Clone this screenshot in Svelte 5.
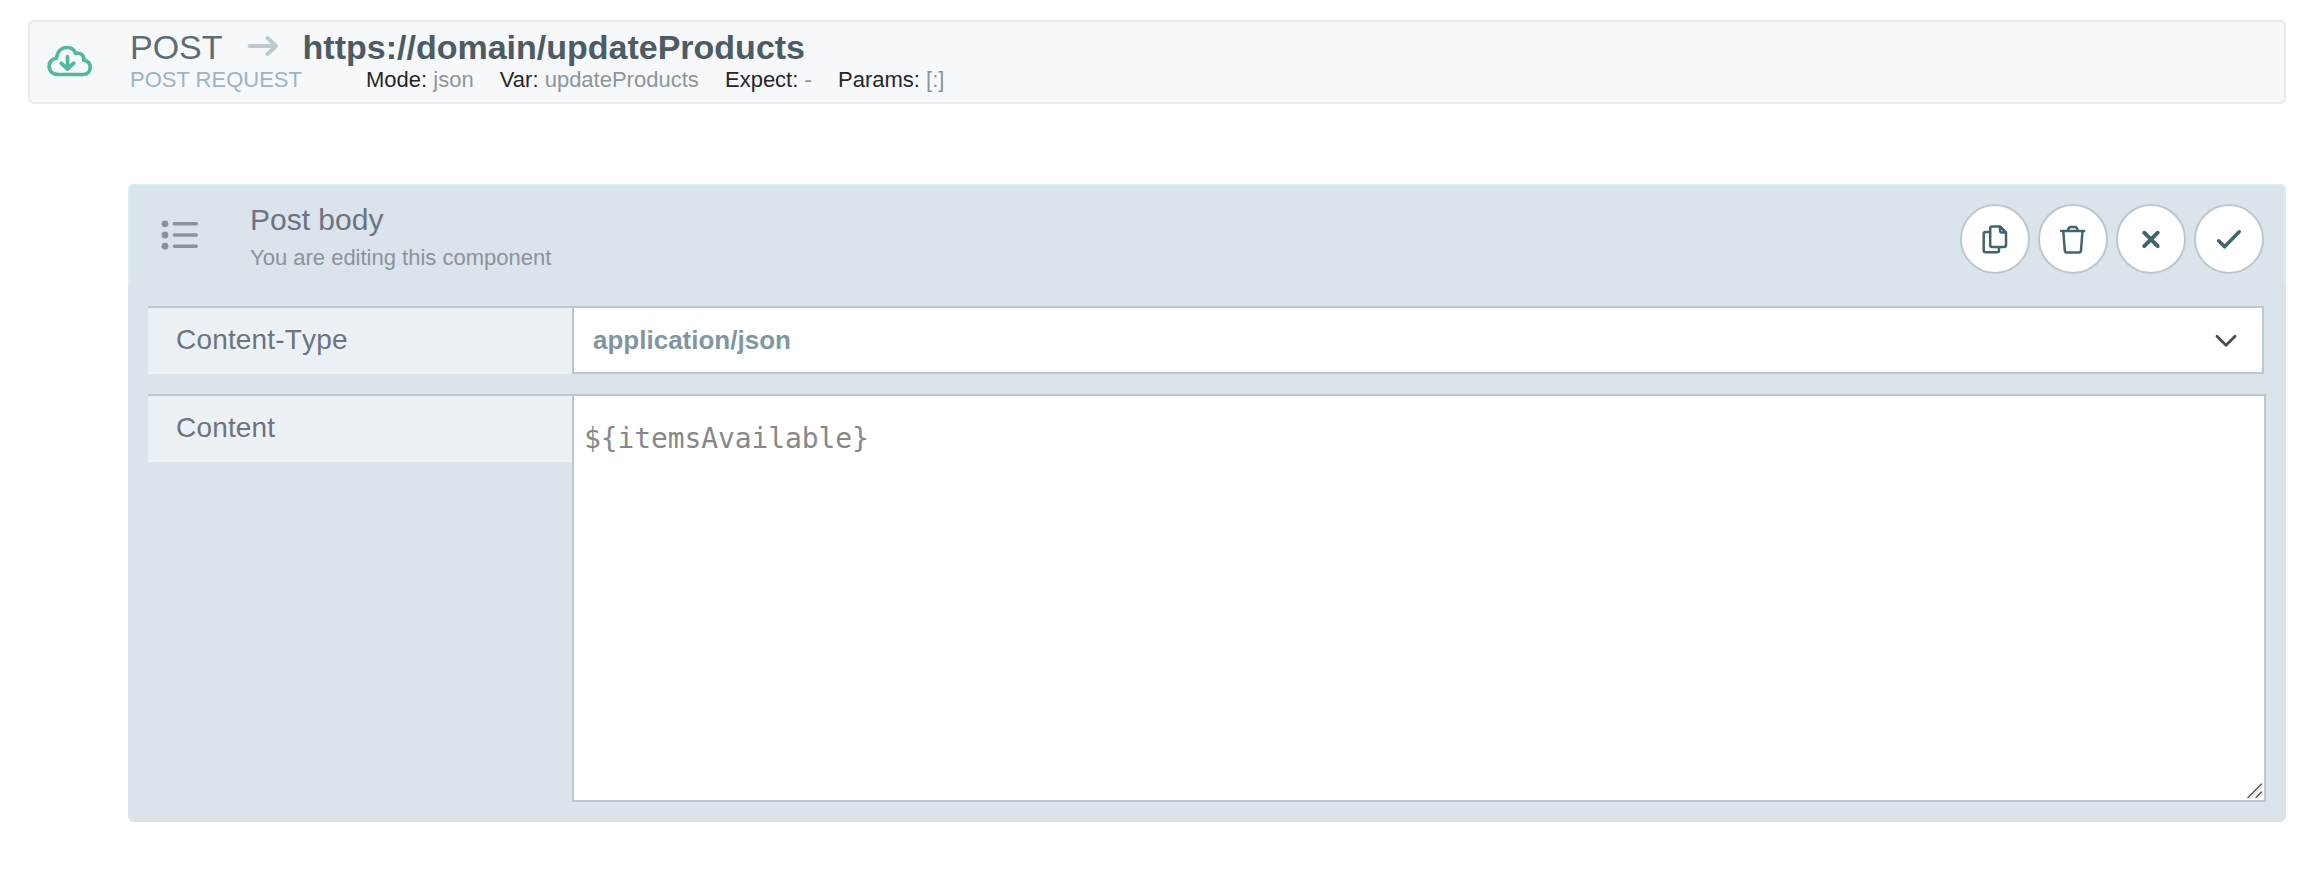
<script>
  const details = [
    { label: 'Mode', value: 'json' },
    { label: 'Var', value: 'updateProducts' },
    { label: 'Expect', value: '-' },
    { label: 'Params', value: '[:]' }
  ];
  let content = $state('${itemsAvailable}');
</script>

<main>
  <section class="request">
    <svg class="cloud" width="46" height="34" viewBox="0 0 46 34">
      <path d="M9.500 13.200C10.500 6 15 2.500 20 2.500c4.500 0 7.300 2.300 8.800 6C34 7.300 37.200 10.500 36.800 15.300C41 16 43.200 18.600 43.200 22.200C43.200 26.600 40.200 29.500 36 29.500H11.500C6 29.500 2.200 26.200 2.200 21.300C2.200 16.800 5 14 9.500 13.200Z" />
      <path d="M20.500 11.500v12.500M14.200 18.200l6.300 6 6.300-6" />
    </svg>
    <div class="summary">
      <div class="title">
        <span>POST</span>
        <svg width="32" height="22" viewBox="0 0 32 22"><path d="M2.500 11H29M20.500 3l8.500 8-8.500 8" /></svg>
        <strong>https://domain/updateProducts</strong>
      </div>
      <div class="meta">
        <span class="kind">POST REQUEST</span>
        {#each details as item}
          <span class="detail"><b>{item.label}:</b> {item.value}</span>
        {/each}
      </div>
    </div>
  </section>

  <section class="editor">
    <header>
      <svg class="list" width="38" height="32" viewBox="0 0 38 32">
        <g><circle cx="4" cy="4.800" r="3.400" /><circle cx="4" cy="16" r="3.400" /><circle cx="4" cy="27.200" r="3.400" /></g>
        <path d="M13.400 4.800h21.800M13.400 16h21.800M13.400 27.200h21.800" />
      </svg>
      <div class="heading">
        <h2>Post body</h2>
        <p>You are editing this component</p>
      </div>
      <div class="actions">
        <button aria-label="Copy">
          <svg viewBox="0 0 70 70"><path d="M32 22.500h8L46 28.500V41q0 2-2 2H32.200q-2 0-2-2V24.500q0-2 1.800-2ZM40 22.500v4q0 2 2 2H46M30 28h-4.500q-1.800 0-1.800 2v16.500q0 1.800 1.800 1.800h11.500q2 0 2-1.800v-3.500" /></svg>
        </button>
        <button aria-label="Delete">
          <svg viewBox="0 0 70 70"><path d="M23.200 27h23M25.300 27l1.500 19.600q.2 1.800 1.800 1.800h12.600q1.600 0 1.800-1.800l1.500-19.600M29.800 27q.6-4 3-4h4q2.400 0 3 4" /></svg>
        </button>
        <button aria-label="Close">
          <svg viewBox="0 0 70 70"><path class="cross" d="M28.200 28.700l13.500 13.500M41.700 28.700l-13.500 13.500" /></svg>
        </button>
        <button aria-label="Save">
          <svg viewBox="0 0 70 70"><path class="check" d="M24.600 36.800l6 6L45.200 27.800" /></svg>
        </button>
      </div>
    </header>

    <div class="fields">
      <div class="row">
        <div class="label">Content-Type</div>
        <div class="select">
          <strong>application/json</strong>
          <svg width="24" height="16" viewBox="0 0 24 16"><path d="M3 4.200l9 9 9-9" /></svg>
        </div>
      </div>
      <div class="row">
        <div class="label">Content</div>
        <div class="area">
          <textarea aria-label="Content" spellcheck="false" bind:value={content}></textarea>
          <svg class="grip" width="16" height="16" viewBox="0 0 16 16">
            <path class="halo" d="M3 15.500L16 2.500M11 15.500L16 10.500" /><path d="M1 14.500L14.500 1M9 14.500L14.500 9" />
          </svg>
        </div>
      </div>
    </div>
  </section>
</main>

<style>
  :global(body) { background: #fff; }
  main {
    box-sizing: border-box;
    padding: 20px 30px 50px 28px;
    font-family: "Liberation Sans", Arial, sans-serif;
  }
  svg { display: block; fill: none; stroke-linecap: round; stroke-linejoin: round; }
  h2, p { margin: 0; font-weight: 400; }

  .request {
    box-sizing: border-box;
    height: 84px;
    display: flex;
    align-items: flex-start;
    background: #f6f8fa;
    border: 2px solid #e8eaf0;
    border-radius: 6px;
  }
  .cloud { margin: 22.600px 0 0 17px; stroke: #4fb99f; stroke-width: 3.700; }
  .summary { margin: 7px 0 0 37px; }
  .title { display: flex; height: 36px; line-height: 36px; font-size: 34px; color: #5e6d72; }
  .title svg { margin: 6px 24px 0 24px; stroke: #bcc9ce; stroke-width: 3.800; }
  .title strong { color: #4c5b64; }
  .meta {
    display: flex;
    margin-top: 3px;
    height: 24px;
    line-height: 24px;
    font-size: 22px;
    color: #8b969a;
    white-space: nowrap;
  }
  .kind { width: 236px; color: #9fb3c3; }
  .detail { margin-right: 26.200px; }
  .detail b { font-weight: 400; color: #262626; }

  .editor {
    margin-top: 80px;
    margin-left: 100px;
    height: 638px;
    background: #dce4eb;
    border-radius: 6px;
  }
  header {
    box-sizing: border-box;
    height: 103px;
    display: flex;
    align-items: flex-start;
    border: 2px solid #d3eefb;
    border-bottom-color: transparent;
    border-radius: 6px;
  }
  .list { margin: 32.500px 0 0 31px; stroke: #8c939b; stroke-width: 3.600; }
  .list g { fill: #87939a; stroke: none; }
  .heading { flex: 1; margin: 16px 0 0 51px; }
  h2 { font-size: 30px; line-height: 36px; color: #6c7381; }
  p { margin-top: 7px; font-size: 22px; line-height: 26px; color: #8a949a; }
  .actions { display: flex; gap: 8px; margin: 18px 20px 0 0; }
  button {
    box-sizing: border-box;
    width: 70px;
    height: 70px;
    padding: 0;
    background: #fff;
    border: 2px solid #bdc8ce;
    border-radius: 50%;
  }
  button svg { width: 70px; height: 70px; margin: -2px; stroke: #416470; stroke-width: 2.500; }
  .cross { stroke-width: 3.900; }
  .check { stroke-width: 3.500; }

  .fields { display: flex; flex-direction: column; gap: 20px; padding: 19px 20px 0; }
  .row { display: flex; align-items: flex-start; }
  .label {
    box-sizing: border-box;
    width: 424px;
    height: 68px;
    padding-left: 28px;
    background: #ecf1f5;
    border-top: 2px solid #bcc8cf;
    color: #6c7381;
    font-size: 28px;
    line-height: 64px;
    letter-spacing: 0.180px;
    font-kerning: none;
  }
  .select {
    box-sizing: border-box;
    flex: 1;
    min-width: 0;
    margin-right: 2px;
    height: 68px;
    display: flex;
    align-items: center;
    justify-content: space-between;
    padding: 0 24px 0 19px;
    background: #fff;
    border: 2px solid #bcc8cf;
    color: #7f979f;
    font-size: 26px;
  }
  .select svg { stroke: #4d4d4d; stroke-width: 2.800; }
  .area { position: relative; flex: 1; min-width: 0; height: 408px; }
  textarea {
    box-sizing: border-box;
    display: block;
    width: 100%;
    height: 100%;
    padding: 27px 10px;
    resize: none;
    outline: none;
    background: #fff;
    border: 2px solid #bcc8cf;
    border-radius: 0;
    color: #888;
    font: 28px/32px "DejaVu Sans Mono", monospace;
    letter-spacing: -0.100px;
  }
  .grip { position: absolute; right: 3px; bottom: 3px; stroke: #555; stroke-width: 1.500; }
  .halo { stroke: #ddd; }
</style>
